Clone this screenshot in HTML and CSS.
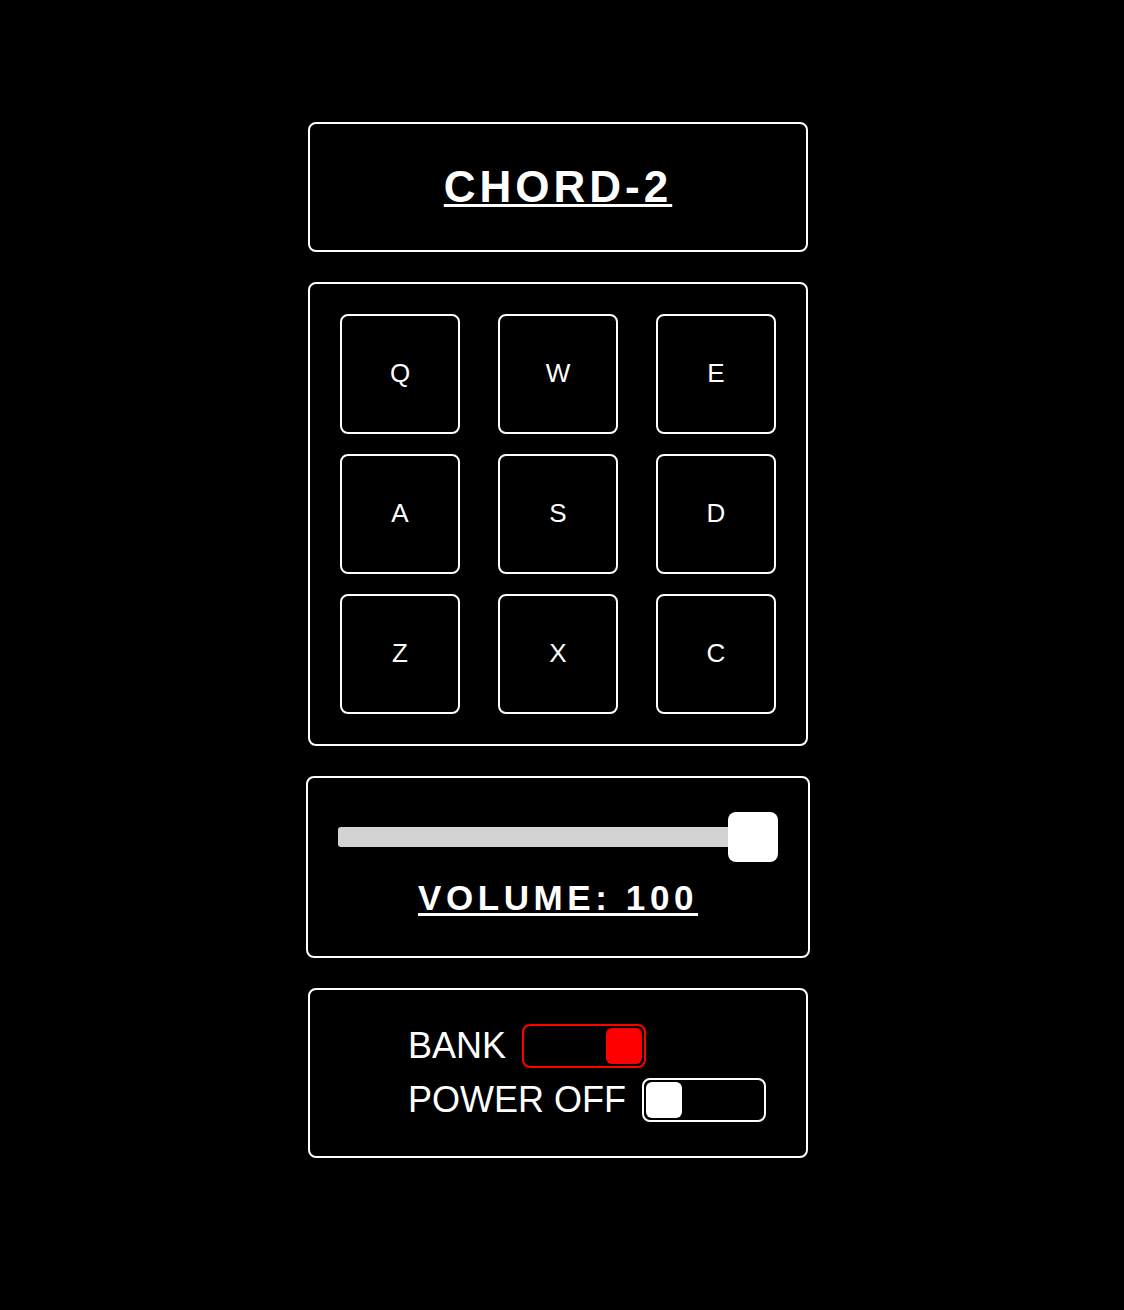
FILE: index.html
```html
<!DOCTYPE html>
<html lang="en">
<head>
<meta charset="utf-8">
<title>Chord-2</title>
<link rel="stylesheet" href="styles.css">
</head>
<body>
<main class="app">
  <section class="panel title-box">
    <h1 class="title">CHORD-2</h1>
  </section>
  <section class="panel pads">
    <div class="pad">Q</div>
    <div class="pad">W</div>
    <div class="pad">E</div>
    <div class="pad">A</div>
    <div class="pad">S</div>
    <div class="pad">D</div>
    <div class="pad">Z</div>
    <div class="pad">X</div>
    <div class="pad">C</div>
  </section>
  <section class="panel volume-box">
    <div class="slider">
      <div class="track"></div>
      <div class="thumb"></div>
    </div>
    <p class="volume-label">VOLUME: 100</p>
  </section>
  <section class="panel switches">
    <div class="switch-row">
      <span class="switch-label">BANK</span>
      <div class="toggle toggle-on"><div class="knob"></div></div>
    </div>
    <div class="switch-row">
      <span class="switch-label">POWER OFF</span>
      <div class="toggle toggle-off"><div class="knob"></div></div>
    </div>
  </section>
</main>
</body>
</html>
```
FILE: styles.css
```css
html, body {
  margin: 0;
  background: #000;
}
body {
  font-family: "Liberation Sans", Arial, sans-serif;
  color: #fff;
}
.app {
  width: 1116px;
  padding-top: 122px;
  display: flex;
  flex-direction: column;
  align-items: center;
  gap: 30px;
}
.panel {
  box-sizing: border-box;
  width: 500px;
  border: 2px solid #fff;
  border-radius: 8px;
}
.title-box {
  height: 130px;
  display: flex;
  align-items: center;
  justify-content: center;
}
.title {
  margin: 0;
  font-size: 44px;
  line-height: 50px;
  font-weight: bold;
  letter-spacing: 4px;
  text-decoration: underline;
  text-decoration-thickness: 3px;
  text-underline-offset: 2px;
}
.pads {
  padding: 30px;
  display: grid;
  grid-template-columns: repeat(3, 120px);
  column-gap: 38px;
  row-gap: 20px;
}
.pad {
  box-sizing: border-box;
  height: 120px;
  padding-bottom: 2px;
  border: 2px solid #fff;
  border-radius: 8px;
  display: flex;
  align-items: center;
  justify-content: center;
  font-size: 26px;
}
.volume-box {
  width: 504px;
  padding: 34px 32px 38px;
  display: flex;
  flex-direction: column;
  align-items: center;
  gap: 16px;
}
.slider {
  width: 440px;
  display: grid;
}
.track, .thumb {
  grid-area: 1 / 1;
}
.track {
  align-self: center;
  height: 20px;
  background: #d3d3d3;
  border-radius: 3px;
}
.thumb {
  justify-self: end;
  width: 50px;
  height: 50px;
  background: #fff;
  border-radius: 8px;
}
.volume-label {
  margin: 0;
  font-size: 35px;
  line-height: 40px;
  font-weight: bold;
  letter-spacing: 4.6px;
  text-decoration: underline;
  text-decoration-thickness: 3px;
  text-underline-offset: 3px;
}
.switches {
  padding: 34px 0 34px 98px;
  display: flex;
  flex-direction: column;
  gap: 10px;
}
.switch-row {
  display: flex;
  align-items: center;
  gap: 16px;
  height: 44px;
}
.switch-label {
  font-size: 36px;
  line-height: 44px;
}
.toggle {
  box-sizing: border-box;
  width: 124px;
  height: 44px;
  padding: 2px;
  border: 2px solid #fff;
  border-radius: 8px;
  display: flex;
}
.knob {
  width: 36px;
  height: 36px;
  border-radius: 6px;
  background: #fff;
}
.toggle-on {
  border-color: #f00;
  justify-content: flex-end;
}
.toggle-on .knob {
  background: #f00;
}
.toggle-off {
  justify-content: flex-start;
}
```
